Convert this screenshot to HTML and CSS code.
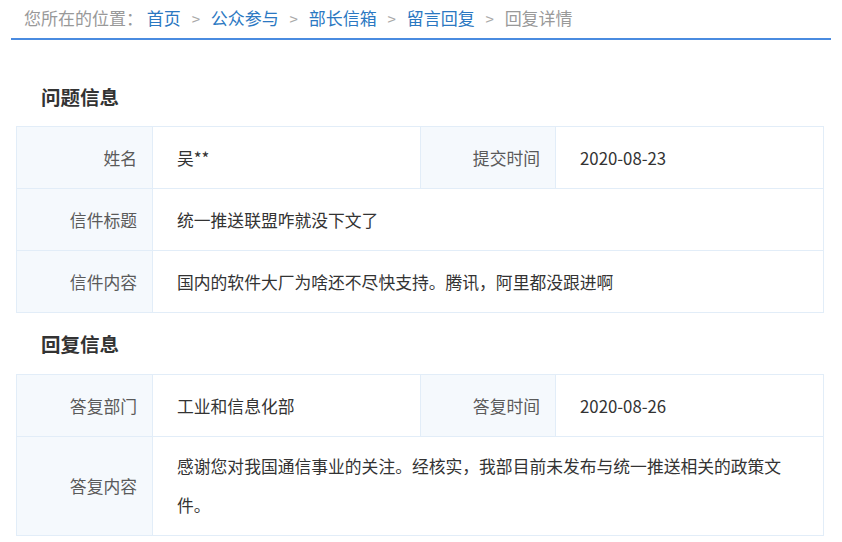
FILE: index.html
```html
<!DOCTYPE html>
<html lang="zh-CN">
<head>
    <meta charset="UTF-8">
    <meta name="viewport" content="width=device-width, initial-scale=1.0">
    <title>回复详情</title>
    <link rel="stylesheet" href="styles.css">
</head>
<body>

    <div class="breadcrumb">
        <span class="crumb-label">您所在的位置：</span>
        <a href="#">首页</a>
        <span class="sep">&gt;</span>
        <a href="#">公众参与</a>
        <span class="sep">&gt;</span>
        <a href="#">部长信箱</a>
        <span class="sep">&gt;</span>
        <a href="#">留言回复</a>
        <span class="sep">&gt;</span>
        <span class="current">回复详情</span>
    </div>

    <div class="content">
        <h2 class="section-title">问题信息</h2>
        <table class="info-table">
            <colgroup>
                <col class="col-label">
                <col class="col-value">
                <col class="col-label2">
                <col class="col-value">
            </colgroup>
            <tr>
                <th>姓名</th>
                <td>吴**</td>
                <th>提交时间</th>
                <td>2020-08-23</td>
            </tr>
            <tr>
                <th>信件标题</th>
                <td colspan="3">统一推送联盟咋就没下文了</td>
            </tr>
            <tr>
                <th>信件内容</th>
                <td colspan="3">国内的软件大厂为啥还不尽快支持。腾讯，阿里都没跟进啊</td>
            </tr>
        </table>

        <h2 class="section-title second">回复信息</h2>
        <table class="info-table">
            <colgroup>
                <col class="col-label">
                <col class="col-value">
                <col class="col-label2">
                <col class="col-value">
            </colgroup>
            <tr>
                <th>答复部门</th>
                <td>工业和信息化部</td>
                <th>答复时间</th>
                <td>2020-08-26</td>
            </tr>
            <tr class="tall-row">
                <th>答复内容</th>
                <td colspan="3"><div class="long-text">感谢您对我国通信事业的关注。经核实，我部目前未发布与统一推送相关的政策文件。</div></td>
            </tr>
        </table>
    </div>

</body>
</html>
```

FILE: styles.css
```css
body {
    margin: 0;
    background-color: #ffffff;
    font-family: "Noto Sans CJK SC", "Noto Sans", sans-serif;
    color: #333;
}

.breadcrumb {
    margin: 0 11px;
    padding-left: 13px;
    height: 38px;
    line-height: 36px;
    font-size: 17px;
    border-bottom: 2px solid #4a8be0; /* blue underline */
    color: #999;
    white-space: nowrap;
}

.breadcrumb a {
    color: #2b78c2;
    text-decoration: none;
}

.breadcrumb .sep {
    color: #aaa;
    margin: 0 7px;
    font-size: 15px;
}

.breadcrumb .current {
    color: #999;
}

.content {
    padding: 0 19px 0 16px;
}

.section-title {
    margin: 44px 0 16px 25px;
    font-size: 19.5px;
    line-height: 26px;
    font-weight: bold;
    color: #333;
}

.section-title.second {
    margin-top: 18px;
    margin-bottom: 17px;
}

.info-table {
    width: 807px;
    border-collapse: collapse;
    table-layout: fixed;
    font-size: 16.8px;
}

.col-label {
    width: 136px;
}

.col-label2 {
    width: 135px;
}

.col-value {
    width: 268px;
}

.info-table th,
.info-table td {
    border: 1px solid #e2edf8;
    height: 61px;
    padding: 0;
}

.info-table th {
    background-color: #f5f9fd;
    color: #5a5a5a;
    font-weight: normal;
    text-align: right;
    padding-right: 15px;
}

.info-table td {
    color: #333;
    padding-left: 24px;
}

.tall-row th,
.tall-row td {
    height: 98px;
}

.long-text {
    max-width: 615px;
    line-height: 39px;
}
```
